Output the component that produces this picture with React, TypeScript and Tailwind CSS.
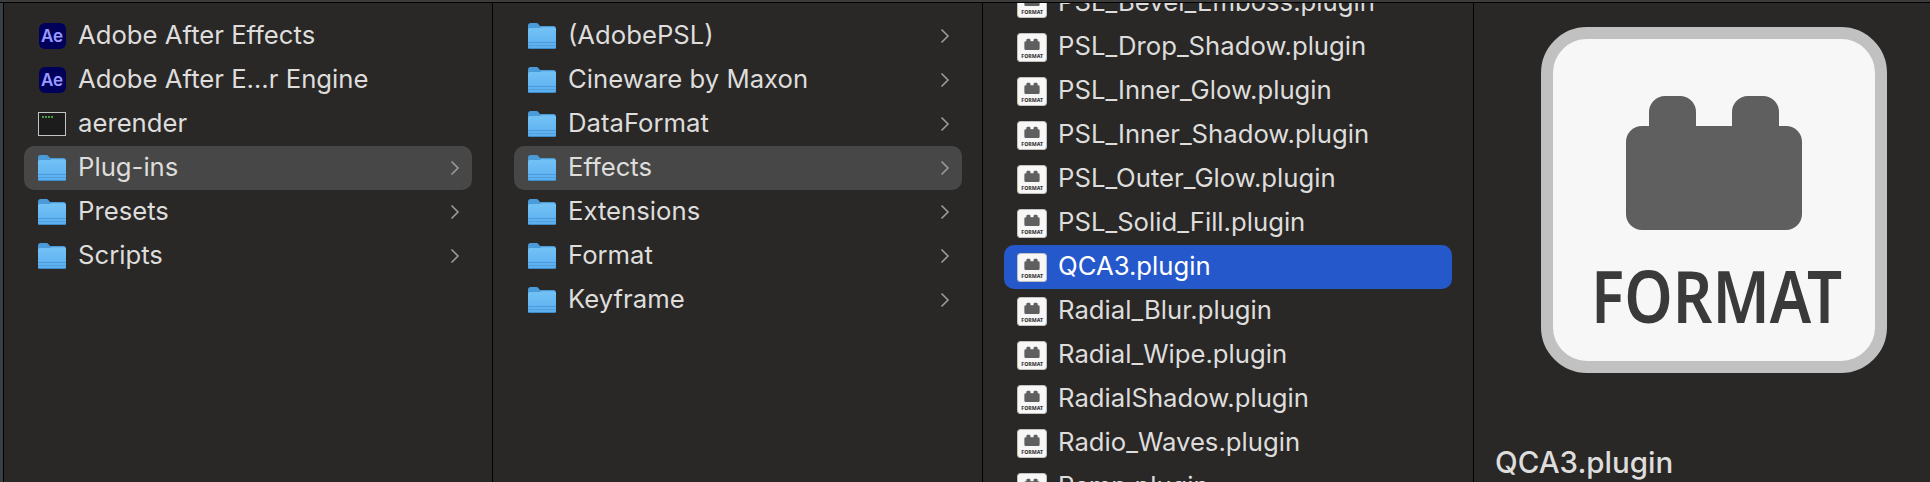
import React from 'react';

const fontStack = "font-['Inter','Liberation_Sans',sans-serif]";

function FolderIcon() {
  return (
    <svg width="28" height="26" viewBox="0 0 28 26" className="shrink-0">
      <defs>
        <linearGradient id="folderBody" x1="0" y1="0" x2="0" y2="1">
          <stop offset="0" stopColor="#74c3f7" />
          <stop offset="1" stopColor="#59aeee" />
        </linearGradient>
      </defs>
      <path d="M0 2.5C0 1 1 0 2.5 0H8c1.2 0 1.8.5 2.6 1.3L12 3h13.5C27 3 28 4 28 5.5V10H0z" fill="#4a9bd8" />
      <path d="M0 7c0-1.2.8-2 2-2h9.5c1 0 1.5-.3 2-.8h12c1.5 0 2.5.9 2.5 2.3V24c0 1.2-.8 2-2 2H2c-1.2 0-2-.8-2-2z" fill="url(#folderBody)" />
      <rect x="0" y="19" width="28" height="1" fill="#4c9cdc" />
      <rect x="0" y="22" width="28" height="1" fill="#4f9fdf" />
      <path d="M0 25h28c-.2.7-1 1-2 1H2c-1 0-1.800-.3-2-1z" fill="#3f8ccb" />
    </svg>
  );
}

function AeIcon() {
  return (
    <div className="flex h-[26px] w-[27px] shrink-0 items-center justify-center rounded-[6px] bg-[#00005b] text-[17px] font-semibold leading-none text-[#9999ff]">
      Ae
    </div>
  );
}

function TerminalIcon() {
  return (
    <div className="flex h-[24px] w-[28px] shrink-0 items-start gap-[1px] border border-[#c4c4c4] bg-[#1b1c1b] px-[3px] pt-[3px]">
      <span className="h-[2px] w-[2px] bg-[#4a9a4a]" />
      <span className="h-[2px] w-[2px] bg-[#4a9a4a]" />
      <span className="h-[2px] w-[2px] bg-[#4a9a4a]" />
      <span className="h-[2px] w-[2px] bg-[#4a9a4a]" />
    </div>
  );
}

function FormatIcon({ size, thin = false }: { size: number; thin?: boolean }) {
  return (
    <svg width={size} height={thin ? size - 1 : size} viewBox="0 0 346 346" preserveAspectRatio="none" className="shrink-0">
      <rect x="6" y="6" width="334" height="334" rx="40" fill="#f7f7f7" stroke="#c1c1c1" strokeWidth="12" />
      <path
        d="M85 116a16 16 0 0 1 16-17h7V85a16 16 0 0 1 16-16h16a16 16 0 0 1 15 16v14h36V85a16 16 0 0 1 16-16h16a16 16 0 0 1 15 16v14h7a16 16 0 0 1 16 17v71a16 16 0 0 1-16 16H101a16 16 0 0 1-16-16z"
        fill="#5f5f5f"
      />
      <text
        x="50"
        y="296"
        textLength="251"
        lengthAdjust="spacingAndGlyphs"
        fontFamily="'Noto Sans', sans-serif"
        fontWeight={thin ? 800 : 600}
        fontSize="72"
        fill="#3a3a3a"
      >
        FORMAT
      </text>
    </svg>
  );
}

function Chevron() {
  return (
    <svg width="10" height="16" viewBox="0 0 10 16" className="shrink-0">
      <path d="M1.500 1.500 8 8l-6.500 6.500" fill="none" stroke="#9b9b9b" strokeWidth="1.600" />
    </svg>
  );
}

type RowProps = {
  label: string;
  icon: React.ReactNode;
  chevron?: boolean;
  state?: 'active' | 'selected';
};

function Row({ label, icon, chevron, state }: RowProps) {
  const bg = state === 'active' ? 'bg-[#474747]' : state === 'selected' ? 'bg-[#2558ca]' : '';
  const text = state === 'selected' ? 'text-white' : 'text-[#dedddc]';
  return (
    <div className={`flex h-[44px] shrink-0 items-center rounded-[10px] pl-[13px] pr-[12px] ${bg}`}>
      <div className="flex w-[30px] shrink-0 justify-center">{icon}</div>
      <span className={`ml-[11px] flex-1 whitespace-nowrap pb-[2px] text-[25.700px] leading-none ${text}`}>{label}</span>
      {chevron && <Chevron />}
    </div>
  );
}

const appItems: RowProps[] = [
  { label: 'Adobe After Effects', icon: <AeIcon /> },
  { label: 'Adobe After E…r Engine', icon: <AeIcon /> },
  { label: 'aerender', icon: <TerminalIcon /> },
  { label: 'Plug-ins', icon: <FolderIcon />, chevron: true, state: 'active' },
  { label: 'Presets', icon: <FolderIcon />, chevron: true },
  { label: 'Scripts', icon: <FolderIcon />, chevron: true },
];

const pluginFolders = ['(AdobePSL)', 'Cineware by Maxon', 'DataFormat', 'Effects', 'Extensions', 'Format', 'Keyframe'];

const effects = [
  'PSL_Bevel_Emboss.plugin',
  'PSL_Drop_Shadow.plugin',
  'PSL_Inner_Glow.plugin',
  'PSL_Inner_Shadow.plugin',
  'PSL_Outer_Glow.plugin',
  'PSL_Solid_Fill.plugin',
  'QCA3.plugin',
  'Radial_Blur.plugin',
  'Radial_Wipe.plugin',
  'RadialShadow.plugin',
  'Radio_Waves.plugin',
  'Ramp.plugin',
];

export default function App() {
  return (
    <div className={`flex h-[482px] w-[1930px] flex-col overflow-hidden bg-[#292827] ${fontStack}`}>
      <div className="h-[3px] shrink-0 border-b border-black bg-[#3c3c3c]" />
      <div className="flex min-h-0 flex-1">
        <div className="w-[3px] shrink-0 bg-[#3a3f46]" />
        <div className="flex w-[490px] shrink-0 flex-col border-x border-black pl-[20px] pr-[20px] pt-[11px]">
          {appItems.map((item) => (
            <Row key={item.label} {...item} />
          ))}
        </div>
        <div className="flex w-[490px] shrink-0 flex-col border-r border-black pl-[21px] pr-[20px] pt-[11px]">
          {pluginFolders.map((name) => (
            <Row key={name} label={name} icon={<FolderIcon />} chevron state={name === 'Effects' ? 'active' : undefined} />
          ))}
        </div>
        <div className="w-[491px] shrink-0 overflow-hidden border-r border-black pl-[21px] pr-[21px]">
          <div className="mt-[-22px] flex flex-col">
            {effects.map((name) => (
              <Row
                key={name}
                label={name}
                icon={<FormatIcon size={30} thin />}
                state={name === 'QCA3.plugin' ? 'selected' : undefined}
              />
            ))}
          </div>
        </div>
        <div className="flex min-w-0 flex-1 flex-col pl-[21px] pt-[24px]">
          <div className="ml-[46px]">
            <FormatIcon size={346} />
          </div>
          <div className="mt-[75px] whitespace-nowrap text-[29.500px] font-medium leading-none text-[#dedddc]">QCA3.plugin</div>
        </div>
      </div>
    </div>
  );
}
